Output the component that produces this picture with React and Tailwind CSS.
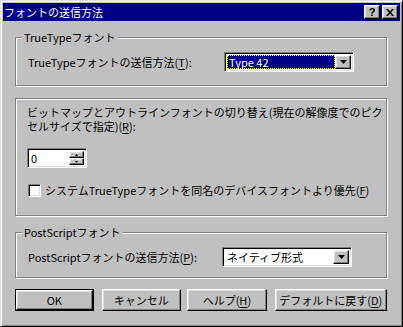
import React from "react";

const raised =
  "border border-t-white border-l-white border-r-black border-b-black shadow-[inset_-1px_-1px_0_#808080,inset_1px_1px_0_#dfdfdf] bg-[#c0c0c0]";
const sunken =
  "border border-t-[#808080] border-l-[#808080] border-r-white border-b-white shadow-[inset_1px_1px_0_#000,inset_-1px_-1px_0_#dfdfdf]";
const etched = "relative border border-[#808080] shadow-[inset_1px_1px_0_#fff,1px_1px_0_#fff]";

// mnemonic key, e.g. (T) with the letter underlined
function Key({ k }) {
  return (
    <span>
      (<span className="underline underline-offset-2">{k}</span>)
    </span>
  );
}

function Arrow() {
  return (
    <svg width="7" height="4" viewBox="0 0 7 4">
      <path d="M0 0h7L3.5 4z" fill="#000" />
    </svg>
  );
}

function Combo({ value, selected, className }) {
  return (
    <div className={`${sunken} bg-white w-[130px] h-[20px] flex items-center p-[2px] ${className}`}>
      {selected ? (
        <div className="flex-1 h-full bg-[#000080] text-white border border-dotted border-[#ffff00] flex items-center pl-[1px] leading-none">
          {value}
        </div>
      ) : (
        <div className="flex-1 h-full flex items-center pl-[2px] leading-none">{value}</div>
      )}
      <div className={`${raised} w-[16px] h-full flex items-center justify-center`}>
        <Arrow />
      </div>
    </div>
  );
}

function Button({ children, className }) {
  return (
    <div className={`${raised} h-full flex items-center justify-center ${className}`}>{children}</div>
  );
}

export default function App() {
  return (
    <div className="w-[403px] h-[327px] bg-[#c0c0c0] border border-t-[#dfdfdf] border-l-[#dfdfdf] border-r-black border-b-black shadow-[inset_1px_1px_0_#fff,inset_-1px_-1px_0_#808080] p-[2px] flex flex-col text-[11px] text-black font-['Noto_Sans_CJK_JP',sans-serif] select-none">
      {/* title bar */}
      <div className="h-[18px] bg-[#000080] flex items-center pl-[1px] pr-[2px]">
        <span className="text-white text-[11px] leading-none flex-1">フォントの送信方法</span>
        <div className={`${raised} w-[16px] h-[14px] flex items-center justify-center font-bold text-[11px] leading-none font-['Liberation_Sans',sans-serif]`}>
          ?
        </div>
        <div className={`${raised} w-[16px] h-[14px] ml-[2px] flex items-center justify-center`}>
          <svg width="8" height="7" viewBox="0 0 8 7">
            <path d="M0 0h2l2 2.5L6 0h2L5 3.5 8 7H6L4 4.5 2 7H0l3-3.5z" fill="#000" />
          </svg>
        </div>
      </div>

      <div className="flex flex-col pl-[12px] pr-[13px]">
        {/* TrueType group */}
        <div className={`${etched} mt-[16px] h-[49px] flex items-start pt-[14px] pl-[12px]`}>
          <span className="absolute left-[6px] top-[-8px] px-[2px] bg-[#c0c0c0] leading-[14px]">TrueTypeフォント</span>
          <span className="w-[196px] h-[20px] flex items-center">
            TrueTypeフォントの送信方法<Key k="T" />:
          </span>
          <Combo value="Type 42" selected />
        </div>

        {/* bitmap group */}
        <div className={`${etched} mt-[12px] h-[118px] flex flex-col items-start pt-[6px] pl-[11px]`}>
          <p className="leading-[14px]">
            ビットマップとアウトラインフォントの切り替え(現在の解像度でのピク
            <br />
            セルサイズで指定)<Key k="R" />:
          </p>
          <div className={`${sunken} bg-white w-[60px] h-[20px] mt-[15px] flex items-center p-[2px]`}>
            <span className="flex-1 pl-[1px] leading-none">0</span>
            <div className="flex flex-col h-full w-[15px]">
              <div className={`${raised} flex-1 flex items-center justify-center`}>
                <svg width="3" height="2" viewBox="0 0 3 2"><path d="M1.5 0L3 2H0z" fill="#000" /></svg>
              </div>
              <div className={`${raised} flex-1 flex items-center justify-center`}>
                <svg width="3" height="2" viewBox="0 0 3 2"><path d="M0 0h3L1.5 2z" fill="#000" /></svg>
              </div>
            </div>
          </div>
          <div className="flex items-center mt-[15px] ml-[1px]">
            <div className={`${sunken} bg-white w-[13px] h-[13px]`} />
            <span className="ml-[4px] leading-[14px]">
              システムTrueTypeフォントを同名のデバイスフォントより優先<Key k="F" />
            </span>
          </div>
        </div>

        {/* PostScript group */}
        <div className={`${etched} mt-[16px] h-[46px] flex items-start pt-[14px] pl-[12px]`}>
          <span className="absolute left-[6px] top-[-8px] px-[2px] bg-[#c0c0c0] leading-[14px]">PostScriptフォント</span>
          <span className="w-[194px] h-[20px] flex items-center">
            PostScriptフォントの送信方法<Key k="P" />:
          </span>
          <Combo value="ネイティブ形式" />
        </div>

        {/* buttons */}
        <div className="flex mt-[11px] h-[22px]">
          <div className="w-[79px] h-full border border-black">
            <Button className="w-full">OK</Button>
          </div>
          <Button className="w-[80px] ml-[8px]">キャンセル</Button>
          <Button className="w-[80px] ml-[6px]">
            ヘルプ<Key k="H" />
          </Button>
          <Button className="w-[113px] ml-[8px]">
            デフォルトに戻す<Key k="D" />
          </Button>
        </div>
      </div>
    </div>
  );
}
